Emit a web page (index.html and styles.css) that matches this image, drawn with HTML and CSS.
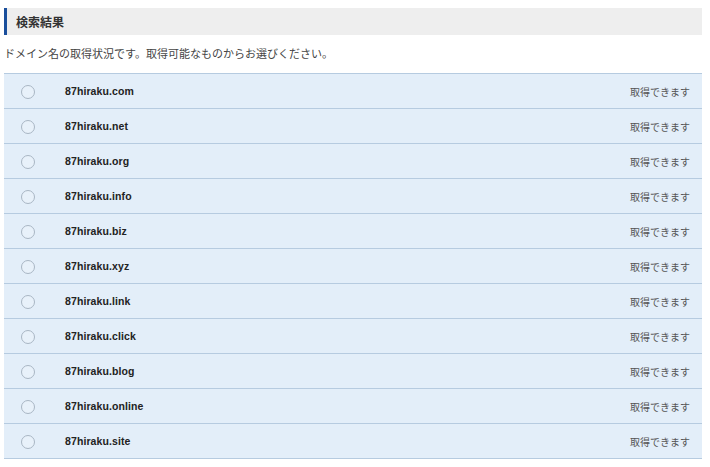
FILE: index.html
```html
<!DOCTYPE html>
<html lang="ja">
<head>
<meta charset="utf-8">
<title>検索結果</title>
<link rel="stylesheet" href="styles.css">
</head>
<body>
<div class="page">
  <h2 class="heading">検索結果</h2>
  <p class="desc">ドメイン名の取得状況です。取得可能なものからお選びください。</p>
  <ul class="list">
    <li class="row"><span class="radio"></span><span class="domain">87hiraku.com</span><span class="status">取得できます</span></li>
    <li class="row"><span class="radio"></span><span class="domain">87hiraku.net</span><span class="status">取得できます</span></li>
    <li class="row"><span class="radio"></span><span class="domain">87hiraku.org</span><span class="status">取得できます</span></li>
    <li class="row"><span class="radio"></span><span class="domain">87hiraku.info</span><span class="status">取得できます</span></li>
    <li class="row"><span class="radio"></span><span class="domain">87hiraku.biz</span><span class="status">取得できます</span></li>
    <li class="row"><span class="radio"></span><span class="domain">87hiraku.xyz</span><span class="status">取得できます</span></li>
    <li class="row"><span class="radio"></span><span class="domain">87hiraku.link</span><span class="status">取得できます</span></li>
    <li class="row"><span class="radio"></span><span class="domain">87hiraku.click</span><span class="status">取得できます</span></li>
    <li class="row"><span class="radio"></span><span class="domain">87hiraku.blog</span><span class="status">取得できます</span></li>
    <li class="row"><span class="radio"></span><span class="domain">87hiraku.online</span><span class="status">取得できます</span></li>
    <li class="row"><span class="radio"></span><span class="domain">87hiraku.site</span><span class="status">取得できます</span></li>
  </ul>
</div>
</body>
</html>
```

FILE: styles.css
```css
html, body {
  margin: 0;
  padding: 0;
  background: #fff;
}
.page {
  padding: 8px 8px 0 4px;
  font-family: "Noto Sans CJK JP", "Noto Sans", sans-serif;
  color: #333;
}
.heading {
  margin: 0;
  height: 27px;
  display: flex;
  align-items: center;
  padding-left: 9px;
  background: #eeeeee;
  border-left: 3px solid #1a4f9c;
  font-size: 12px;
  font-weight: bold;
  color: #333;
}
.desc {
  margin: 0;
  padding: 10px 0 0 0;
  height: 38px;
  box-sizing: border-box;
  font-size: 11px;
  line-height: 16px;
  color: #444;
}
.list {
  list-style: none;
  margin: 0;
  padding: 0;
  border-bottom: 1px solid #b6cbe0;
}
.row {
  display: flex;
  align-items: center;
  height: 34px;
  border-top: 1px solid #b6cbe0;
  background: #e3eef9;
}
.radio {
  width: 12px;
  height: 12px;
  border: 1.5px solid #a9b6c4;
  border-radius: 50%;
  background: #e8f1fa;
  margin-left: 17px;
  margin-top: 1px;
  flex: none;
}
.domain {
  margin-left: 30px;
  font-family: "Liberation Sans", Arial, sans-serif;
  font-size: 10.5px;
  font-weight: bold;
  color: #222;
  letter-spacing: 0.1px;
}
.status {
  margin-left: auto;
  margin-right: 12px;
  font-size: 10px;
  color: #555;
}
```
